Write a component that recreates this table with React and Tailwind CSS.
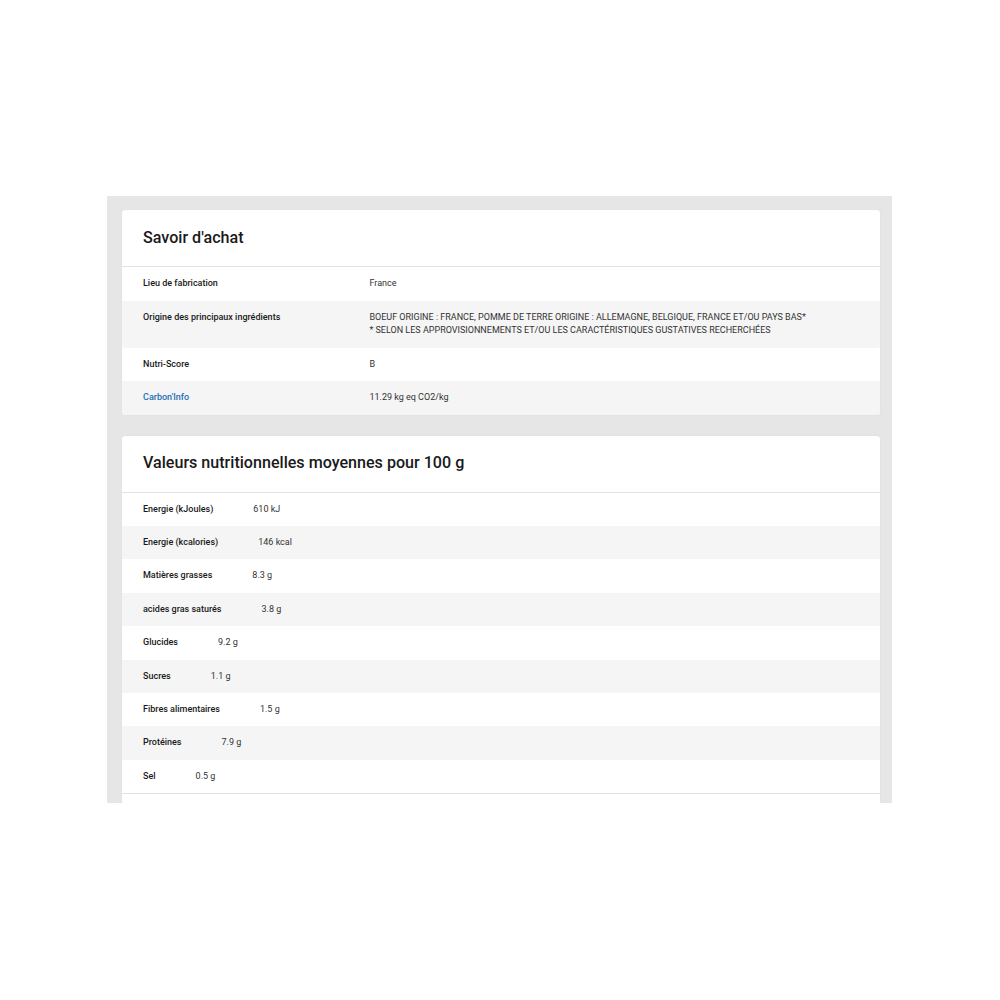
import React from 'react';

const achat = [
  { label: "Lieu de fabrication", value: ["France"] },
  {
    label: "Origine des principaux ingrédients",
    value: [
      "BOEUF ORIGINE : FRANCE, POMME DE TERRE ORIGINE : ALLEMAGNE, BELGIQUE, FRANCE ET/OU PAYS BAS*",
      "* SELON LES APPROVISIONNEMENTS ET/OU LES CARACTÉRISTIQUES GUSTATIVES RECHERCHÉES",
    ],
  },
  { label: "Nutri-Score", value: ["B"] },
  { label: "Carbon'Info", value: ["11.29 kg eq CO2/kg"], link: true },
];

const nutrition = [
  ["Energie (kJoules)", "610 kJ"],
  ["Energie (kcalories)", "146 kcal"],
  ["Matières grasses", "8.3 g"],
  ["acides gras saturés", "3.8 g"],
  ["Glucides", "9.2 g"],
  ["Sucres", "1.1 g"],
  ["Fibres alimentaires", "1.5 g"],
  ["Protéines", "7.9 g"],
  ["Sel", "0.5 g"],
];

const Card = ({ title, children }) => (
  <div className="bg-white rounded-[3px] shadow-[0_0_2px_rgba(0,0,0,0.06)]">
    <div className="h-[57px] px-[21px] flex items-center border-b border-[#e3e3e3]">
      <h2 className="text-[16.1px] font-medium text-[#1a1a1a] leading-none">{title}</h2>
    </div>
    {children}
  </div>
);

export default function App() {
  return (
    <div className="min-h-screen bg-white pt-[196px]" style={{ fontFamily: 'Roboto, "Liberation Sans", sans-serif' }}>
      <div className="ml-[107px] w-[785px] h-[607px] overflow-hidden bg-[#e6e6e6] pt-[14px] pl-[15px] pr-[12px]">
        <Card title="Savoir d'achat">
          {achat.map((row, i) => (
            <div
              key={row.label}
              className={`flex py-[10px] text-[9px] leading-[13.5px] rounded-b-[3px] ${i % 2 ? 'bg-[#f5f5f5]' : 'bg-white'}`}
            >
              <div className={`w-[30%] pl-[21px] font-medium ${row.link ? 'text-[#1f6fb5]' : 'text-[#1a1a1a]'}`}>
                {row.label}
              </div>
              <div className="flex-1 pl-[20px] text-[#333]">
                {row.value.map((v) => (
                  <div key={v}>{v}</div>
                ))}
              </div>
            </div>
          ))}
        </Card>

        <div className="mt-[21px]">
          <Card title="Valeurs nutritionnelles moyennes pour 100 g">
            <div className="border-b border-[#e3e3e3]">
              {nutrition.map(([label, value], i) => (
                <div
                  key={label}
                  className={`flex gap-[40px] pl-[21px] py-[10px] text-[9px] leading-[13.4px] ${i % 2 ? 'bg-[#f5f5f5]' : 'bg-white'}`}
                >
                  <span className="font-medium text-[#1a1a1a]">{label}</span>
                  <span className="text-[#333]">{value}</span>
                </div>
              ))}
            </div>
            <div className="h-[40px]" />
          </Card>
        </div>
      </div>
    </div>
  );
}
